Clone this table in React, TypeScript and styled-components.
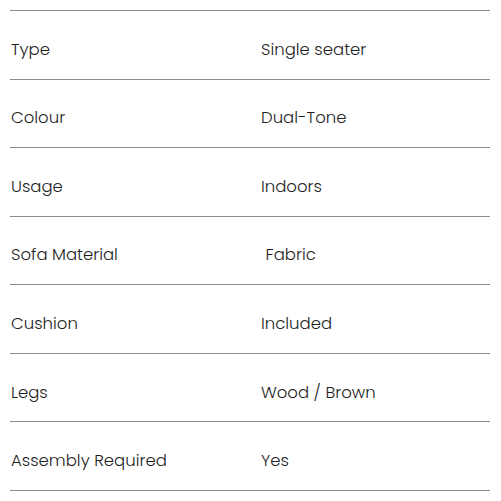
import styled, { createGlobalStyle } from 'styled-components';

const GlobalStyle = createGlobalStyle`
	body {
		margin: 0;
		background: #fff;
		font-family: Poppins, Lato, 'Liberation Sans', sans-serif;
	}
`;

const Wrapper = styled.div`
	padding: 10px;
`;

const Table = styled.div`
	display: grid;
	grid-template-rows: repeat(7, 68.57px);
	border-top: 1px solid #8c8c8c;
	width: 480px;
`;

const Row = styled.div`
	display: grid;
	grid-template-columns: 250px 1fr;
	align-items: center;
	border-bottom: 1px solid #8c8c8c;
	box-sizing: border-box;
	padding: 9px 0 0 1px;
	font-size: 16.5px;
	font-weight: 300;
	color: #1e1e1e;
`;

const Cell = styled.div`
	white-space: pre;
`;

const specs: [string, string][] = [
	['Type', 'Single seater'],
	['Colour', 'Dual-Tone'],
	['Usage', 'Indoors'],
	['Sofa Material', ' Fabric'],
	['Cushion', 'Included'],
	['Legs', 'Wood / Brown'],
	['Assembly Required', 'Yes'],
];

const App = () => {
	return (
		<Wrapper>
			<GlobalStyle />
			<Table>
				{specs.map(([label, value]) => (
					<Row key={label}>
						<Cell>{label}</Cell>
						<Cell>{value}</Cell>
					</Row>
				))}
			</Table>
		</Wrapper>
	);
};

export default App;
